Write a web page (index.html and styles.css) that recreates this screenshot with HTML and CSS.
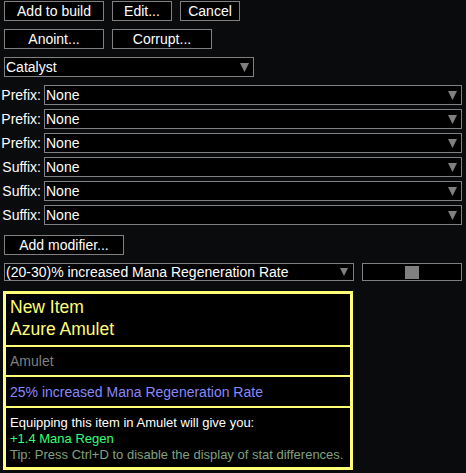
FILE: index.html
```html
<!DOCTYPE html>
<html>
<head>
<meta charset="utf-8">
<link rel="stylesheet" href="styles.css">
</head>
<body>
<div class="panel">
  <div class="row r1">
    <div class="btn w100">Add to build</div>
    <div class="btn w60">Edit...</div>
    <div class="btn w60">Cancel</div>
  </div>
  <div class="row r2">
    <div class="btn w100">Anoint...</div>
    <div class="btn w100">Corrupt...</div>
  </div>
  <div class="select catalyst">
    <span>Catalyst</span>
    <svg class="arrow" width="9" height="9" viewBox="0 0 9 9"><path d="M0 0H9L4.5 9Z"/></svg>
  </div>
  <div class="affixes">
    <div class="affix"><span class="label">Prefix:</span><div class="select grow"><span>None</span><svg class="arrow" width="9" height="9" viewBox="0 0 9 9"><path d="M0 0H9L4.5 9Z"/></svg></div></div>
    <div class="affix"><span class="label">Prefix:</span><div class="select grow"><span>None</span><svg class="arrow" width="9" height="9" viewBox="0 0 9 9"><path d="M0 0H9L4.5 9Z"/></svg></div></div>
    <div class="affix"><span class="label">Prefix:</span><div class="select grow"><span>None</span><svg class="arrow" width="9" height="9" viewBox="0 0 9 9"><path d="M0 0H9L4.5 9Z"/></svg></div></div>
    <div class="affix"><span class="label">Suffix:</span><div class="select grow"><span>None</span><svg class="arrow" width="9" height="9" viewBox="0 0 9 9"><path d="M0 0H9L4.5 9Z"/></svg></div></div>
    <div class="affix"><span class="label">Suffix:</span><div class="select grow"><span>None</span><svg class="arrow" width="9" height="9" viewBox="0 0 9 9"><path d="M0 0H9L4.5 9Z"/></svg></div></div>
    <div class="affix"><span class="label">Suffix:</span><div class="select grow"><span>None</span><svg class="arrow" width="9" height="9" viewBox="0 0 9 9"><path d="M0 0H9L4.5 9Z"/></svg></div></div>
  </div>
  <div class="btn w120 addmod">Add modifier...</div>
  <div class="row modrow">
    <div class="select mod">
      <span>(20-30)% increased Mana Regeneration Rate</span>
      <svg class="arrow small" width="8" height="8" viewBox="0 0 8 8"><path d="M0 0H8L4 8Z"/></svg>
    </div>
    <div class="slider"><div class="knob"></div></div>
  </div>
  <div class="item">
    <div class="sec head">
      <div>New Item</div>
      <div>Azure Amulet</div>
    </div>
    <div class="sec base">Amulet</div>
    <div class="sec mods">25% increased Mana Regeneration Rate</div>
    <div class="sec compare">
      <div class="eq">Equipping this item in Amulet will give you:</div>
      <div class="gain">+1.4 Mana Regen</div>
      <div class="tip">Tip: Press Ctrl+D to disable the display of stat differences.</div>
    </div>
  </div>
</div>
</body>
</html>
```

FILE: styles.css
```css
html, body {
  margin: 0;
  background: #0a0b0d;
}
body {
  font-family: "Liberation Sans", Arial, sans-serif;
  font-size: 14px;
  color: #ffffff;
  width: 466px;
  height: 473px;
  overflow: hidden;
}
.panel {
  padding: 1px 4px 0 4px;
  display: flex;
  flex-direction: column;
  align-items: flex-start;
}
.row {
  display: flex;
  gap: 8px;
}
.r2, .catalyst, .affixes, .modrow {
  margin-top: 8px;
}
.addmod, .item {
  margin-top: 10px;
}
.btn {
  box-sizing: border-box;
  height: 20px;
  border: 1px solid #808080;
  background: #000;
  display: flex;
  align-items: center;
  justify-content: center;
  line-height: 18px;
  white-space: nowrap;
}
.w100 { width: 100px; }
.w60 { width: 60px; }
.w120 { width: 120px; }
.select {
  box-sizing: border-box;
  height: 20px;
  border: 1px solid #808080;
  background: #000;
  display: flex;
  align-items: center;
  justify-content: space-between;
  padding: 0 4px 0 1px;
  line-height: 18px;
  white-space: nowrap;
}
.arrow {
  display: block;
  fill: #808080;
  flex: none;
}
.catalyst { width: 250px; }
.affixes {
  display: flex;
  flex-direction: column;
  gap: 4px;
  align-self: stretch;
}
.affix {
  display: flex;
  align-items: center;
}
.label {
  width: 40px;
  padding-right: 3px;
  box-sizing: border-box;
  display: flex;
  justify-content: flex-end;
  white-space: nowrap;
  flex: none;
}
.grow { flex: 1; }
.modrow { align-self: stretch; }
.mod {
  width: 350px;
  height: 18px;
  line-height: 16px;
  padding-right: 5px;
}
.slider {
  box-sizing: border-box;
  width: 100px;
  height: 18px;
  border: 1px solid #808080;
  background: #000;
  display: flex;
  align-items: center;
  justify-content: center;
}
.knob {
  width: 14px;
  height: 13px;
  background: #808080;
}
.item {
  box-sizing: border-box;
  width: 350px;
  margin-left: -1px;
  border: 3px solid #ffff77;
  background: #000;
}
.sec {
  padding: 0 4px;
}
.head {
  padding-top: 2px;
  padding-bottom: 5px;
  font-size: 17.5px;
  line-height: 22px;
  color: #ffff77;
}
.base {
  border-top: 2px solid #ffff77;
  padding-top: 5px;
  padding-bottom: 5px;
  line-height: 18px;
  color: #7f7f7f;
}
.mods {
  border-top: 2px solid #ffff77;
  padding-top: 6px;
  padding-bottom: 5px;
  line-height: 18px;
  color: #8888ff;
}
.compare {
  border-top: 2px solid #ffff77;
  padding-top: 7px;
  padding-bottom: 4px;
  font-size: 13px;
  line-height: 16px;
  white-space: nowrap;
}
.eq { color: #ffffff; }
.gain { color: #33ff77; }
.tip { color: #80a080; }
```
